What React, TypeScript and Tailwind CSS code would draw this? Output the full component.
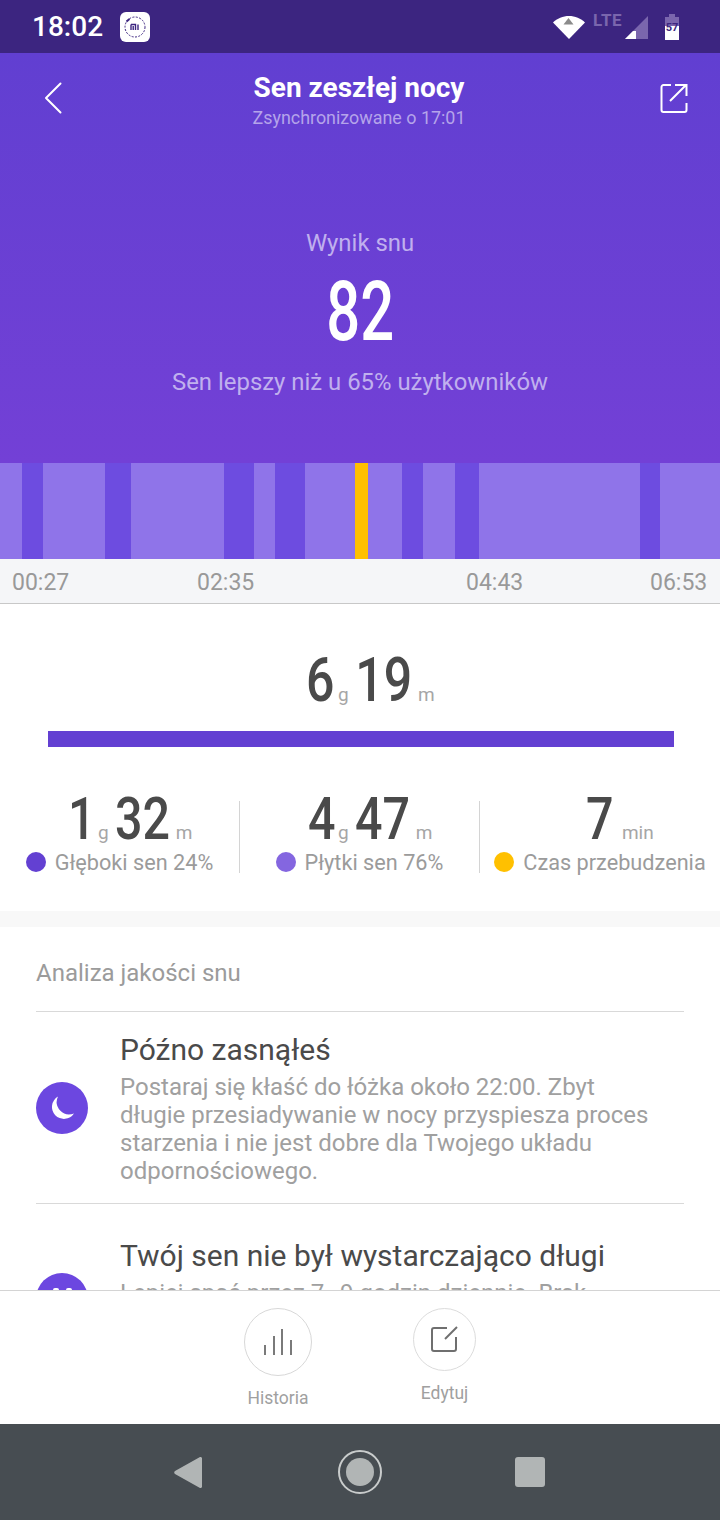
const SEGMENTS: [number, string][] = [
  [22, "bg-[#8f74e9]"],
  [21, "bg-[#6d4ce0]"],
  [62, "bg-[#8f74e9]"],
  [26, "bg-[#6d4ce0]"],
  [93, "bg-[#8f74e9]"],
  [30, "bg-[#6d4ce0]"],
  [21, "bg-[#8f74e9]"],
  [30, "bg-[#6d4ce0]"],
  [50, "bg-[#8f74e9]"],
  [13, "bg-[#ffc000]"],
  [34, "bg-[#8f74e9]"],
  [21, "bg-[#6d4ce0]"],
  [32, "bg-[#8f74e9]"],
  [24, "bg-[#6d4ce0]"],
  [161, "bg-[#8f74e9]"],
  [20, "bg-[#6d4ce0]"],
  [60, "bg-[#8f74e9]"],
];

function Num({ children, size = "text-[61px]" }: { children: string; size?: string }) {
  return (
    <span className={`inline-block scale-x-[0.82] leading-none font-medium text-[#4a4a4a] ${size}`}>
      {children}
    </span>
  );
}

function Unit({ children, gap = "" }: { children: string; gap?: string }) {
  return <span className={`text-[19px] leading-none text-[#a6a6a6] ${gap}`}>{children}</span>;
}

function StatusBar() {
  return (
    <div className="flex h-[53px] shrink-0 items-center bg-[#3c2580] pr-[41px] pl-[32px]">
      <span className="text-[28px] leading-none font-medium text-white">18:02</span>
      <div className="ml-[17px] flex h-[30px] w-[30px] items-center justify-center rounded-[6px] bg-white">
        <svg width="24" height="24" viewBox="0 0 24 24" fill="none">
          <circle cx="12" cy="12" r="10" stroke="#3c2580" strokeWidth="1" strokeDasharray="2 1.4" />
          <path d="M3.500 6.500l3-2.500" stroke="#3c2580" strokeWidth="2" />
          <path d="M8 9.500h4.500V15M10.200 11v4M8 9.500V15M15 9.500V15" stroke="#3c2580" strokeWidth="1.400" />
        </svg>
      </div>
      <div className="ml-auto flex items-center">
        <svg width="32" height="24" viewBox="0 0 32 24">
          <path d="M0 7.500C4 3.500 10 1 16 1s12 2.500 16 6.500L16 24z" fill="#fff" />
          <path d="M15.500 3l5 6.500h-10z" fill="#8b8b8b" />
        </svg>
        <span className="mb-[13px] ml-[8px] text-[17px] leading-none font-bold tracking-[0.5px] text-[#7a66ad]">LTE</span>
        <svg className="mt-[1px] ml-[3px]" width="23" height="23" viewBox="0 0 23 23">
          <path d="M23 0v23H0z" fill="#7a66ad" />
          <path d="M8 15v8H0z" fill="#fff" />
          <path d="M8 15h3v8H8z" fill="#fff" />
        </svg>
        <div className="relative ml-[17px] h-[26px] w-[14px]">
          <svg width="14" height="26" viewBox="0 0 14 26">
            <path d="M4 0h6v3h4v9H0V3h4z" fill="#7a66ad" />
            <path d="M0 12h14v14H0z" fill="#fff" />
          </svg>
          <span className="absolute top-[8px] left-0 w-full text-center text-[11px] leading-none font-bold text-[#3c2580]">57</span>
        </div>
      </div>
    </div>
  );
}

function Header() {
  return (
    <div className="h-[410px] shrink-0 bg-gradient-to-b from-[#613fd1] to-[#7340d6]">
      <div className="flex items-start justify-between pt-[18px] pr-[32px] pl-[44px]">
        <svg className="mt-[11px]" width="18" height="32" viewBox="0 0 18 32" fill="none">
          <path d="M16.500 1.500L2 16l14.500 14.500" stroke="#fff" strokeWidth="2" strokeLinecap="round" strokeLinejoin="round" />
        </svg>
        <div className="-ml-[2px] flex flex-col items-center">
          <div className="text-[28px] leading-[34px] font-bold text-white">Sen zeszłej nocy</div>
          <div className="mt-[3px] text-[17.9px] leading-[20px] text-[#b5a4ea]">Zsynchronizowane o 17:01</div>
        </div>
        <svg className="mt-[12px]" width="30" height="30" viewBox="0 0 30 30" fill="none">
          <path d="M13 2H5.500A2 2 0 0 0 3.500 4v23a2 2 0 0 0 2 2h21a2 2 0 0 0 2-2v-7" stroke="#fff" strokeWidth="2" />
          <path d="M12 18L28 2M17 2h11.500v11" stroke="#fff" strokeWidth="2" />
        </svg>
      </div>
      <div className="mt-[101px] flex flex-col items-center">
        <div className="text-[23.9px] leading-[28px] text-[#c0b0ee]">Wynik snu</div>
        <div className="mt-[11px] scale-x-[0.72] text-[83px] leading-[88px] font-medium text-white">82</div>
        <div className="mt-[11px] text-[23.9px] leading-[30px] text-[#c0b0ee]">Sen lepszy niż u 65% użytkowników</div>
      </div>
    </div>
  );
}

function Stat({ value, unit, value2, unit2, label, dot, divider, offset = "pl-[18px]", gap }: {
  value: string;
  unit: string;
  value2?: string;
  unit2?: string;
  label: string;
  dot: string;
  divider?: boolean;
  offset?: string;
  gap?: string;
}) {
  return (
    <div className={`flex h-[72px] w-[240px] flex-col items-center justify-between ${divider ? "border-r border-[#d4d4d4]" : ""}`}>
      <div className={`-mt-[12px] flex items-baseline justify-center ${offset}`}>
        <Num size="text-[59px]">{value}</Num>
        <Unit gap={gap}>{unit}</Unit>
        {value2 && <Num size="text-[59px]">{value2}</Num>}
        {unit2 && <Unit>{unit2}</Unit>}
      </div>
      <div className="-mb-[2px] flex items-center whitespace-nowrap">
        <span className={`mr-[9px] -mt-[2px] h-[20px] w-[20px] rounded-full ${dot}`} />
        <span className="text-[21.7px] leading-[24px] text-[#9b9b9b]">{label}</span>
      </div>
    </div>
  );
}

function Advice({ title, body, top, iconTop, icon }: {
  title: string;
  body: string;
  top: string;
  iconTop: string;
  icon: React.ReactNode;
}) {
  return (
    <div className={`flex items-start border-t border-[#d9d9d9] pb-[18px] ${top}`}>
      <div className={`flex h-[52px] w-[52px] shrink-0 items-center justify-center rounded-full bg-[#6c47e0] ${iconTop}`}>
        {icon}
      </div>
      <div className="ml-[32px] w-[530px]">
        <div className="text-[30px] leading-[38px] text-[#4a4a4a]">{title}</div>
        <div className="mt-[4px] text-[24px] leading-[28px] text-[#a0a0a0]">{body}</div>
      </div>
    </div>
  );
}

function BottomBar() {
  return (
    <div className="flex h-[134px] shrink-0 items-start justify-center gap-[101px] border-t border-[#d4d4d4] bg-white pt-[17px]">
      <div className="flex flex-col items-center">
        <div className="flex h-[68px] w-[68px] items-center justify-center rounded-full border border-[#d8d8d8]">
          <svg width="28" height="26" viewBox="0 0 28 26" fill="none" stroke="#7a7a7a" strokeWidth="2">
            <path d="M1 26V16M10 26V7M18 26V0M27 26V11" />
          </svg>
        </div>
        <span className="mt-[12px] text-[17.5px] leading-[20px] text-[#a0a0a0]">Historia</span>
      </div>
      <div className="flex flex-col items-center">
        <div className="flex h-[63px] w-[63px] items-center justify-center rounded-full border border-[#dcdcdc]">
          <svg width="28" height="27" viewBox="0 0 28 27" fill="none" stroke="#6f6f6f" strokeWidth="2">
            <path d="M16 2H3a2 2 0 0 0-2 2v19a2 2 0 0 0 2 2h20a2 2 0 0 0 2-2V11" />
            <path d="M14 13L26 1" />
          </svg>
        </div>
        <span className="mt-[12px] text-[17.5px] leading-[20px] text-[#a0a0a0]">Edytuj</span>
      </div>
    </div>
  );
}

function NavBar() {
  return (
    <div className="flex h-[96px] shrink-0 items-center bg-[#474d52] pl-[174px]">
      <svg width="28" height="33" viewBox="0 0 28 33">
        <path d="M26 1a1.500 1.500 0 0 1 2 1.500v28a1.500 1.500 0 0 1-2 1.500L1 18a1.800 1.800 0 0 1 0-3z" fill="#b1b5b5" />
      </svg>
      <div className="ml-[136px] flex h-[44px] w-[44px] items-center justify-center rounded-full border-2 border-[#c9cccc]">
        <div className="h-[28px] w-[28px] rounded-full bg-[#b1b5b5]" />
      </div>
      <div className="ml-[133px] h-[30px] w-[30px] rounded-[3px] bg-[#b1b5b5]" />
    </div>
  );
}

export default function App() {
  return (
    <div className="flex h-[1520px] w-[720px] flex-col overflow-hidden bg-white font-['Roboto',sans-serif]">
      <StatusBar />
      <Header />
      <div className="flex h-[96px] shrink-0">
        {SEGMENTS.map(([w, color], i) => (
          <div key={i} className={color} style={{ width: w }} />
        ))}
      </div>
      <div className="flex h-[45px] shrink-0 items-center border-b border-[#c8c8c8] bg-[#f5f6f8] pt-[2px] pl-[12px] text-[23px] leading-none text-[#999999]">
        <span className="w-[185px]">00:27</span>
        <span className="w-[269px]">02:35</span>
        <span className="w-[184px]">04:43</span>
        <span>06:53</span>
      </div>
      <div className="h-[307px] shrink-0">
        <div className="flex justify-center pt-[46px] pl-[18px]">
          <div className="flex items-baseline">
            <Num>6</Num>
            <Unit>g</Unit>
            <Num>19</Num>
            <Unit>m</Unit>
          </div>
        </div>
        <div className="mt-[20px] mr-[46px] ml-[48px] h-[16px] bg-[#6340d2]" />
        <div className="mt-[54px] flex">
          <Stat value="1" unit="g" value2="32" unit2="m" label="Głęboki sen 24%" dot="bg-[#6340d2]" divider />
          <Stat value="4" unit="g" value2="47" unit2="m" label="Płytki sen 76%" dot="bg-[#8466e0]" divider />
          <Stat value="7" unit="min" label="Czas przebudzenia" dot="bg-[#ffc000]" offset="pl-[37px]" gap="ml-[5px]" />
        </div>
      </div>
      <div className="h-[16px] shrink-0 bg-[#f8f8f8]" />
      <div className="min-h-0 flex-1 overflow-hidden px-[36px]">
        <div className="flex h-[84px] items-center pt-[8px] text-[24px] text-[#9b9b9b]">Analiza jakości snu</div>
        <Advice
          title="Późno zasnąłeś"
          body="Postaraj się kłaść do łóżka około 22:00. Zbyt długie przesiadywanie w nocy przyspiesza proces starzenia i nie jest dobre dla Twojego układu odpornościowego."
          top="pt-[19px]"
          iconTop="mt-[51px]"
          icon={
            <svg width="26" height="26" viewBox="0 0 26 26">
              <path d="M9 1.500A12 12 0 1 0 25 18.500 12.500 12.500 0 0 1 9 1.500z" fill="#fff" />
            </svg>
          }
        />
        <Advice
          title="Twój sen nie był wystarczająco długi"
          body="Lepiej spać przez 7–9 godzin dziennie. Brak wystarczającej ilości snu osłabia organizm."
          top="pt-[33px]"
          iconTop="mt-[36px]"
          icon={
            <svg width="26" height="26" viewBox="0 0 26 26" fill="#fff">
              <rect x="4" y="2" width="6" height="10" rx="2" />
              <rect x="17" y="2" width="6" height="10" rx="2" />
            </svg>
          }
        />
      </div>
      <BottomBar />
      <NavBar />
    </div>
  );
}
